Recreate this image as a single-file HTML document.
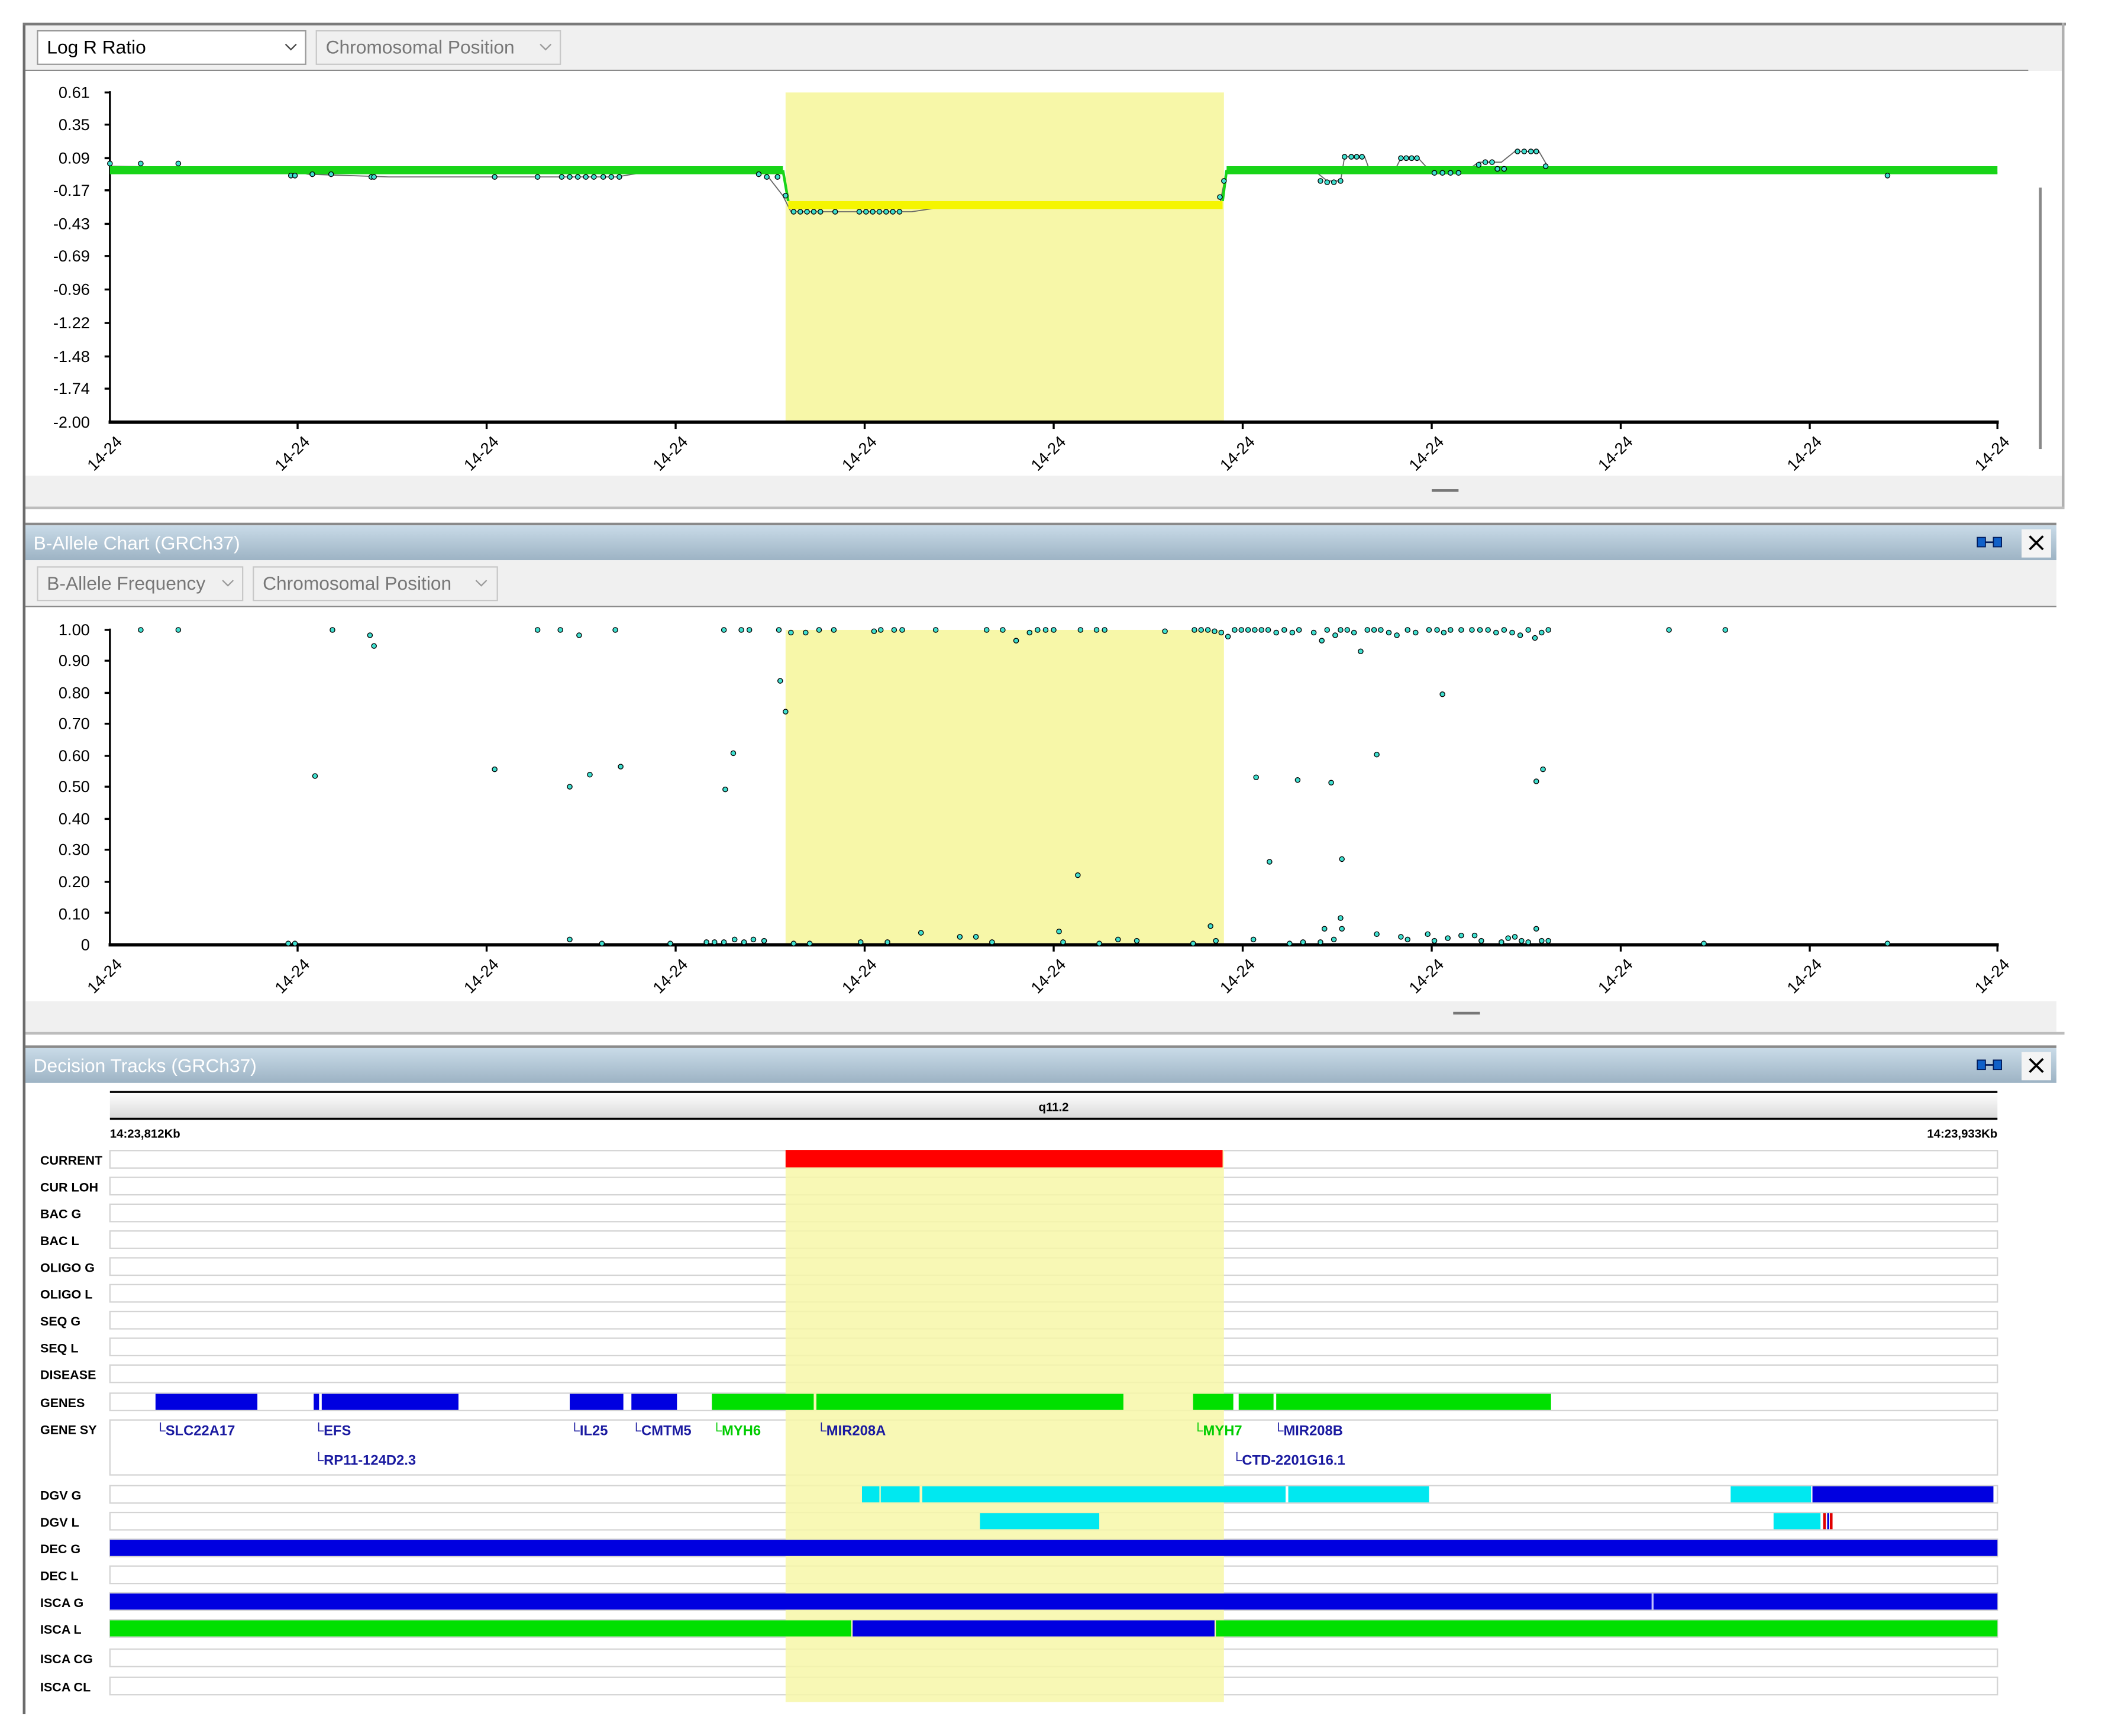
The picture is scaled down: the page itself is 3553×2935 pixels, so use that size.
<!DOCTYPE html>
<html><head><meta charset="utf-8"><style>
html,body{margin:0;padding:0;background:#fff;width:3553px;height:2935px;overflow:hidden}
svg{display:block}
text{font-family:"Liberation Sans",sans-serif}
</style></head><body>
<svg width="3553" height="2935" viewBox="0 0 1568 1295.3" preserveAspectRatio="none" xmlns="http://www.w3.org/2000/svg">
<defs>
<linearGradient id="tb" x1="0" y1="0" x2="0" y2="1"><stop offset="0" stop-color="#c9dbe8"/><stop offset="1" stop-color="#9db3c4"/></linearGradient>
<linearGradient id="ideo" x1="0" y1="0" x2="0" y2="1"><stop offset="0" stop-color="#ffffff"/><stop offset="1" stop-color="#d8d8d8"/></linearGradient>
</defs>
<rect width="1568" height="1296" fill="#fff"/>
<rect x="17" y="17" width="2" height="1262" fill="#6b6b6b"/>
<rect x="17" y="17" width="1524" height="2" fill="#7a7a7a"/>
<rect x="1538" y="17" width="2" height="362" fill="#b0b0b0"/>

<rect x="19" y="19" width="1519" height="34" fill="#f0f0f0"/>
<rect x="19" y="52" width="1494" height="1" fill="#8a8a8a"/>
<rect x="28" y="23" width="200" height="25" fill="#fff" stroke="#9a9a9a"/>
<text x="35" y="40" font-size="14" fill="#000">Log R Ratio</text>
<path d="M213 33 l4 4 l4 -4" fill="none" stroke="#444" stroke-width="1"/>
<rect x="236" y="23" width="182" height="25" fill="#f0f0f0" stroke="#c8c8c8"/>
<text x="243" y="40" font-size="14" fill="#777">Chromosomal Position</text>
<path d="M403 33 l4 4 l4 -4" fill="none" stroke="#999" stroke-width="1"/>
<rect x="19" y="53" width="1494" height="302" fill="#fff"/>
<rect x="19" y="355" width="1519" height="23" fill="#f0f0f0"/>
<rect x="1068" y="365" width="20" height="2" fill="#777"/>
<rect x="1513" y="53" width="25" height="302" fill="#fff"/>
<rect x="1521" y="140" width="2" height="195" fill="#888"/>
<rect x="19" y="378" width="1521" height="2" fill="#bdbdbd"/>

<rect x="586" y="69" width="327" height="246" fill="#f7f7a8"/>
<g font-size="12" fill="#000" text-anchor="end">
<text x="67" y="73">0.61</text><text x="67" y="97">0.35</text><text x="67" y="122">0.09</text><text x="67" y="146">-0.17</text><text x="67" y="171">-0.43</text><text x="67" y="195">-0.69</text><text x="67" y="220">-0.96</text><text x="67" y="245">-1.22</text><text x="67" y="270">-1.48</text><text x="67" y="294">-1.74</text><text x="67" y="319">-2.00</text>
</g>
<g stroke="#000" stroke-width="1.5">
<line x1="82" y1="68" x2="82" y2="316"/>
<line x1="81" y1="315" x2="1491" y2="315" stroke-width="2.5"/>
<path d="M78 69h4M78 93h4M78 118h4M78 142h4M78 167h4M78 191h4M78 216h4M78 241h4M78 266h4M78 290h4M222 315v5M363 315v5M504 315v5M645 315v5M786 315v5M927 315v5M1068 315v5M1209 315v5M1350 315v5M1490 315v5"/>
</g>
<g font-size="12" fill="#000">
<text transform="translate(70,352) rotate(-45)">14-24</text><text transform="translate(210,352) rotate(-45)">14-24</text><text transform="translate(351,352) rotate(-45)">14-24</text><text transform="translate(492,352) rotate(-45)">14-24</text><text transform="translate(633,352) rotate(-45)">14-24</text><text transform="translate(774,352) rotate(-45)">14-24</text><text transform="translate(915,352) rotate(-45)">14-24</text><text transform="translate(1056,352) rotate(-45)">14-24</text><text transform="translate(1197,352) rotate(-45)">14-24</text><text transform="translate(1338,352) rotate(-45)">14-24</text><text transform="translate(1478,352) rotate(-45)">14-24</text>
</g>
<path d="M82 124 L210 126 L230 130 L290 132 L460 132 L490 127 L570 128 L584 146 L590 158 L680 158 L700 155 L910 152 L915 127 L980 127 L990 135 L1000 135 L1003 117 L1018 117 L1022 128 L1040 128 L1045 118 L1058 118 L1068 129 L1092 129 L1103 121 L1120 121 L1130 113 L1148 113 L1155 125 L1490 129" fill="none" stroke="#666" stroke-width="0.8"/>
<rect x="82" y="124" width="502" height="6" fill="#18d418"/>
<rect x="915" y="124" width="575" height="6" fill="#18d418"/>
<path d="M584 127 L588 150" stroke="#18d418" stroke-width="2"/>
<path d="M912 150 L915 127" stroke="#18d418" stroke-width="2"/>
<rect x="588" y="150" width="324" height="6" fill="#f5f500"/>
<g fill="#40e0d0" stroke="#000" stroke-width="0.6">
<circle cx="82" cy="122" r="1.8"/><circle cx="105" cy="122" r="1.8"/><circle cx="133" cy="122" r="1.8"/><circle cx="217" cy="131" r="1.8"/><circle cx="220" cy="131" r="1.8"/><circle cx="233" cy="130" r="1.8"/><circle cx="247" cy="130" r="1.8"/><circle cx="277" cy="132" r="1.8"/><circle cx="279" cy="132" r="1.8"/><circle cx="369" cy="132" r="1.8"/><circle cx="401" cy="132" r="1.8"/><circle cx="419" cy="132" r="1.8"/><circle cx="425" cy="132" r="1.8"/><circle cx="431" cy="132" r="1.8"/><circle cx="437" cy="132" r="1.8"/><circle cx="443" cy="132" r="1.8"/><circle cx="450" cy="132" r="1.8"/><circle cx="456" cy="132" r="1.8"/><circle cx="462" cy="132" r="1.8"/><circle cx="566" cy="130" r="1.8"/><circle cx="572" cy="132" r="1.8"/><circle cx="580" cy="132" r="1.8"/><circle cx="586" cy="146" r="1.8"/>
<circle cx="592" cy="158" r="1.8"/><circle cx="597" cy="158" r="1.8"/><circle cx="602" cy="158" r="1.8"/><circle cx="607" cy="158" r="1.8"/><circle cx="612" cy="158" r="1.8"/><circle cx="623" cy="158" r="1.8"/><circle cx="641" cy="158" r="1.8"/><circle cx="646" cy="158" r="1.8"/><circle cx="651" cy="158" r="1.8"/><circle cx="656" cy="158" r="1.8"/><circle cx="661" cy="158" r="1.8"/><circle cx="666" cy="158" r="1.8"/><circle cx="671" cy="158" r="1.8"/><circle cx="910" cy="147" r="1.8"/><circle cx="913" cy="135" r="1.8"/>
<circle cx="985" cy="135" r="1.8"/><circle cx="990" cy="136" r="1.8"/><circle cx="995" cy="136" r="1.8"/><circle cx="1000" cy="135" r="1.8"/><circle cx="1003" cy="117" r="1.8"/><circle cx="1008" cy="117" r="1.8"/><circle cx="1012" cy="117" r="1.8"/><circle cx="1016" cy="117" r="1.8"/><circle cx="1045" cy="118" r="1.8"/><circle cx="1049" cy="118" r="1.8"/><circle cx="1053" cy="118" r="1.8"/><circle cx="1057" cy="118" r="1.8"/><circle cx="1070" cy="129" r="1.8"/><circle cx="1076" cy="129" r="1.8"/><circle cx="1082" cy="129" r="1.8"/><circle cx="1088" cy="129" r="1.8"/><circle cx="1103" cy="123" r="1.8"/><circle cx="1108" cy="121" r="1.8"/><circle cx="1113" cy="121" r="1.8"/><circle cx="1117" cy="126" r="1.8"/><circle cx="1122" cy="126" r="1.8"/><circle cx="1132" cy="113" r="1.8"/><circle cx="1137" cy="113" r="1.8"/><circle cx="1142" cy="113" r="1.8"/><circle cx="1146" cy="113" r="1.8"/><circle cx="1153" cy="124" r="1.8"/><circle cx="1408" cy="131" r="1.8"/>
</g>

<rect x="19" y="390" width="1515" height="2" fill="#8a8a8a"/>
<rect x="19" y="392" width="1515" height="26" fill="url(#tb)"/>
<text x="25" y="410" font-size="14" fill="#fff">B-Allele Chart (GRCh37)</text>
<rect x="1475" y="401" width="6" height="7" fill="#1060c8" stroke="#001a5a" stroke-width="0.8"/><rect x="1487" y="401" width="6" height="7" fill="#1060c8" stroke="#001a5a" stroke-width="0.8"/><rect x="1481" y="404" width="6" height="1.2" fill="#001a5a"/>
<rect x="1508" y="395" width="22" height="21" fill="#f4f4f4"/>
<path d="M1514 400 l10 10 M1524 400 l-10 10" stroke="#000" stroke-width="1.6"/>
<rect x="19" y="418" width="1515" height="34" fill="#f0f0f0"/>
<rect x="19" y="452" width="1515" height="1" fill="#8a8a8a"/>
<rect x="28" y="423" width="153" height="25" fill="#f0f0f0" stroke="#c8c8c8"/>
<text x="35" y="440" font-size="14" fill="#777">B-Allele Frequency</text>
<path d="M166 433 l4 4 l4 -4" fill="none" stroke="#999"/>
<rect x="189" y="423" width="182" height="25" fill="#f0f0f0" stroke="#c8c8c8"/>
<text x="196" y="440" font-size="14" fill="#777">Chromosomal Position</text>
<path d="M355 433 l4 4 l4 -4" fill="none" stroke="#999"/>
<rect x="19" y="747" width="1515" height="23" fill="#f0f0f0"/>
<rect x="1084" y="755" width="20" height="2" fill="#777"/>
<rect x="19" y="770" width="1521" height="2" fill="#bdbdbd"/>

<rect x="586" y="470" width="327" height="235" fill="#f7f7a8"/>
<g font-size="12" fill="#000" text-anchor="end">
<text x="67" y="474">1.00</text><text x="67" y="497">0.90</text><text x="67" y="521">0.80</text><text x="67" y="544">0.70</text><text x="67" y="568">0.60</text><text x="67" y="591">0.50</text><text x="67" y="615">0.40</text><text x="67" y="638">0.30</text><text x="67" y="662">0.20</text><text x="67" y="686">0.10</text><text x="67" y="709">0</text>
</g>
<g stroke="#000" stroke-width="1.5">
<line x1="82" y1="469" x2="82" y2="706"/>
<line x1="81" y1="705" x2="1491" y2="705" stroke-width="2.5"/>
<path d="M78 470h4M78 493h4M78 517h4M78 540h4M78 564h4M78 587h4M78 611h4M78 634h4M78 658h4M78 681h4M222 705v5M363 705v5M504 705v5M645 705v5M786 705v5M927 705v5M1068 705v5M1209 705v5M1350 705v5M1490 705v5"/>
</g>
<g font-size="12" fill="#000">
<text transform="translate(70,742) rotate(-45)">14-24</text><text transform="translate(210,742) rotate(-45)">14-24</text><text transform="translate(351,742) rotate(-45)">14-24</text><text transform="translate(492,742) rotate(-45)">14-24</text><text transform="translate(633,742) rotate(-45)">14-24</text><text transform="translate(774,742) rotate(-45)">14-24</text><text transform="translate(915,742) rotate(-45)">14-24</text><text transform="translate(1056,742) rotate(-45)">14-24</text><text transform="translate(1197,742) rotate(-45)">14-24</text><text transform="translate(1338,742) rotate(-45)">14-24</text><text transform="translate(1478,742) rotate(-45)">14-24</text>
</g>
<g fill="#40e0d0" stroke="#000" stroke-width="0.6">
<circle cx="105" cy="470" r="1.8"/><circle cx="133" cy="470" r="1.8"/><circle cx="248" cy="470" r="1.8"/><circle cx="276" cy="474" r="1.8"/><circle cx="279" cy="482" r="1.8"/><circle cx="401" cy="470" r="1.8"/><circle cx="418" cy="470" r="1.8"/><circle cx="432" cy="474" r="1.8"/><circle cx="459" cy="470" r="1.8"/><circle cx="540" cy="470" r="1.8"/><circle cx="553" cy="470" r="1.8"/><circle cx="559" cy="470" r="1.8"/><circle cx="581" cy="470" r="1.8"/><circle cx="590" cy="472" r="1.8"/><circle cx="601" cy="472" r="1.8"/><circle cx="611" cy="470" r="1.8"/><circle cx="622" cy="470" r="1.8"/><circle cx="652" cy="471" r="1.8"/><circle cx="657" cy="470" r="1.8"/><circle cx="667" cy="470" r="1.8"/><circle cx="673" cy="470" r="1.8"/><circle cx="698" cy="470" r="1.8"/><circle cx="736" cy="470" r="1.8"/><circle cx="748" cy="470" r="1.8"/><circle cx="758" cy="478" r="1.8"/><circle cx="768" cy="472" r="1.8"/><circle cx="774" cy="470" r="1.8"/><circle cx="780" cy="470" r="1.8"/><circle cx="786" cy="470" r="1.8"/><circle cx="806" cy="470" r="1.8"/><circle cx="818" cy="470" r="1.8"/><circle cx="824" cy="470" r="1.8"/><circle cx="869" cy="471" r="1.8"/>
<circle cx="891" cy="470" r="1.8"/><circle cx="896" cy="470" r="1.8"/><circle cx="901" cy="470" r="1.8"/><circle cx="906" cy="471" r="1.8"/><circle cx="911" cy="472" r="1.8"/><circle cx="916" cy="475" r="1.8"/><circle cx="921" cy="470" r="1.8"/><circle cx="926" cy="470" r="1.8"/><circle cx="931" cy="470" r="1.8"/><circle cx="936" cy="470" r="1.8"/><circle cx="941" cy="470" r="1.8"/><circle cx="946" cy="470" r="1.8"/><circle cx="952" cy="472" r="1.8"/><circle cx="958" cy="470" r="1.8"/><circle cx="964" cy="472" r="1.8"/><circle cx="969" cy="470" r="1.8"/><circle cx="980" cy="472" r="1.8"/><circle cx="986" cy="478" r="1.8"/><circle cx="990" cy="470" r="1.8"/><circle cx="996" cy="474" r="1.8"/><circle cx="1000" cy="470" r="1.8"/><circle cx="1005" cy="470" r="1.8"/><circle cx="1010" cy="472" r="1.8"/><circle cx="1015" cy="486" r="1.8"/><circle cx="1020" cy="470" r="1.8"/><circle cx="1025" cy="470" r="1.8"/><circle cx="1030" cy="470" r="1.8"/><circle cx="1036" cy="472" r="1.8"/><circle cx="1042" cy="474" r="1.8"/><circle cx="1050" cy="470" r="1.8"/><circle cx="1056" cy="472" r="1.8"/><circle cx="1066" cy="470" r="1.8"/><circle cx="1072" cy="470" r="1.8"/><circle cx="1077" cy="472" r="1.8"/><circle cx="1082" cy="470" r="1.8"/><circle cx="1090" cy="470" r="1.8"/><circle cx="1098" cy="470" r="1.8"/><circle cx="1104" cy="470" r="1.8"/><circle cx="1110" cy="470" r="1.8"/><circle cx="1116" cy="472" r="1.8"/><circle cx="1122" cy="470" r="1.8"/><circle cx="1128" cy="472" r="1.8"/><circle cx="1134" cy="474" r="1.8"/><circle cx="1140" cy="470" r="1.8"/><circle cx="1145" cy="476" r="1.8"/><circle cx="1150" cy="472" r="1.8"/><circle cx="1155" cy="470" r="1.8"/><circle cx="1245" cy="470" r="1.8"/><circle cx="1287" cy="470" r="1.8"/>
<circle cx="235" cy="579" r="1.8"/><circle cx="369" cy="574" r="1.8"/><circle cx="425" cy="587" r="1.8"/><circle cx="440" cy="578" r="1.8"/><circle cx="463" cy="572" r="1.8"/><circle cx="541" cy="589" r="1.8"/><circle cx="547" cy="562" r="1.8"/><circle cx="582" cy="508" r="1.8"/><circle cx="586" cy="531" r="1.8"/><circle cx="804" cy="653" r="1.8"/><circle cx="947" cy="643" r="1.8"/><circle cx="1001" cy="641" r="1.8"/><circle cx="1027" cy="563" r="1.8"/><circle cx="937" cy="580" r="1.8"/><circle cx="968" cy="582" r="1.8"/><circle cx="993" cy="584" r="1.8"/><circle cx="1076" cy="518" r="1.8"/><circle cx="1146" cy="583" r="1.8"/><circle cx="1151" cy="574" r="1.8"/>
<circle cx="215" cy="704" r="1.8"/><circle cx="220" cy="704" r="1.8"/><circle cx="425" cy="701" r="1.8"/><circle cx="449" cy="704" r="1.8"/><circle cx="500" cy="704" r="1.8"/><circle cx="527" cy="703" r="1.8"/><circle cx="533" cy="703" r="1.8"/><circle cx="540" cy="703" r="1.8"/><circle cx="548" cy="701" r="1.8"/><circle cx="555" cy="703" r="1.8"/><circle cx="562" cy="701" r="1.8"/><circle cx="570" cy="702" r="1.8"/><circle cx="592" cy="704" r="1.8"/><circle cx="604" cy="704" r="1.8"/><circle cx="642" cy="703" r="1.8"/><circle cx="662" cy="703" r="1.8"/><circle cx="687" cy="696" r="1.8"/><circle cx="716" cy="699" r="1.8"/><circle cx="728" cy="699" r="1.8"/><circle cx="740" cy="703" r="1.8"/><circle cx="790" cy="695" r="1.8"/><circle cx="793" cy="703" r="1.8"/><circle cx="820" cy="704" r="1.8"/><circle cx="834" cy="701" r="1.8"/><circle cx="848" cy="702" r="1.8"/><circle cx="890" cy="704" r="1.8"/><circle cx="903" cy="691" r="1.8"/><circle cx="907" cy="702" r="1.8"/><circle cx="935" cy="701" r="1.8"/><circle cx="962" cy="704" r="1.8"/><circle cx="972" cy="703" r="1.8"/><circle cx="985" cy="703" r="1.8"/><circle cx="988" cy="693" r="1.8"/><circle cx="995" cy="701" r="1.8"/><circle cx="1000" cy="685" r="1.8"/><circle cx="1001" cy="693" r="1.8"/><circle cx="1027" cy="697" r="1.8"/><circle cx="1045" cy="699" r="1.8"/><circle cx="1050" cy="701" r="1.8"/><circle cx="1065" cy="697" r="1.8"/><circle cx="1070" cy="702" r="1.8"/><circle cx="1080" cy="700" r="1.8"/><circle cx="1090" cy="698" r="1.8"/><circle cx="1100" cy="698" r="1.8"/><circle cx="1105" cy="702" r="1.8"/><circle cx="1120" cy="703" r="1.8"/><circle cx="1125" cy="700" r="1.8"/><circle cx="1130" cy="699" r="1.8"/><circle cx="1135" cy="702" r="1.8"/><circle cx="1140" cy="703" r="1.8"/><circle cx="1146" cy="693" r="1.8"/><circle cx="1150" cy="702" r="1.8"/><circle cx="1155" cy="702" r="1.8"/><circle cx="1271" cy="704" r="1.8"/><circle cx="1408" cy="704" r="1.8"/>
</g>

<rect x="19" y="780" width="1515" height="2" fill="#8a8a8a"/>
<rect x="19" y="782" width="1515" height="26" fill="url(#tb)"/>
<text x="25" y="800" font-size="14" fill="#fff">Decision Tracks (GRCh37)</text>
<rect x="1475" y="791" width="6" height="7" fill="#1060c8" stroke="#001a5a" stroke-width="0.8"/><rect x="1487" y="791" width="6" height="7" fill="#1060c8" stroke="#001a5a" stroke-width="0.8"/><rect x="1481" y="794" width="6" height="1.2" fill="#001a5a"/>
<rect x="1508" y="785" width="22" height="21" fill="#f4f4f4"/>
<path d="M1514 790 l10 10 M1524 790 l-10 10" stroke="#000" stroke-width="1.6"/>

<rect x="82" y="815" width="1408" height="20" fill="url(#ideo)"/>
<rect x="82" y="814" width="1408" height="1.5" fill="#000"/>
<rect x="82" y="834" width="1408" height="1.5" fill="#000"/>
<text x="786" y="829" font-size="9" font-weight="bold" text-anchor="middle">q11.2</text>
<text x="82" y="849" font-size="9" font-weight="bold">14:23,812Kb</text>
<text x="1490" y="849" font-size="9" font-weight="bold" text-anchor="end">14:23,933Kb</text>

<g fill="#fff" stroke="#d4d4d4" stroke-width="1">
<rect x="82" y="858.5" width="1408" height="13"/><rect x="82" y="878.5" width="1408" height="13"/><rect x="82" y="898.5" width="1408" height="13"/><rect x="82" y="918.5" width="1408" height="13"/><rect x="82" y="938.5" width="1408" height="13"/><rect x="82" y="958.5" width="1408" height="13"/><rect x="82" y="978.5" width="1408" height="13"/><rect x="82" y="998.5" width="1408" height="13"/><rect x="82" y="1018.5" width="1408" height="13"/><rect x="82" y="1039.5" width="1408" height="13"/><rect x="82" y="1059.5" width="1408" height="41"/><rect x="82" y="1108.5" width="1408" height="13"/><rect x="82" y="1128.5" width="1408" height="13"/><rect x="82" y="1148.5" width="1408" height="13"/><rect x="82" y="1168.5" width="1408" height="13"/><rect x="82" y="1188.5" width="1408" height="13"/><rect x="82" y="1208.5" width="1408" height="13"/><rect x="82" y="1230.5" width="1408" height="13"/><rect x="82" y="1251.5" width="1408" height="13"/>
</g>
<rect x="586" y="858" width="327" height="412" fill="#f7f7a8" opacity="0.85"/>

<g font-size="9.5" font-weight="bold" fill="#000">
<text x="30" y="869">CURRENT</text><text x="30" y="889">CUR LOH</text><text x="30" y="909">BAC G</text><text x="30" y="929">BAC L</text><text x="30" y="949">OLIGO G</text><text x="30" y="969">OLIGO L</text><text x="30" y="989">SEQ G</text><text x="30" y="1009">SEQ L</text><text x="30" y="1029">DISEASE</text><text x="30" y="1050">GENES</text><text x="30" y="1070">GENE SY</text><text x="30" y="1119">DGV G</text><text x="30" y="1139">DGV L</text><text x="30" y="1159">DEC G</text><text x="30" y="1179">DEC L</text><text x="30" y="1199">ISCA G</text><text x="30" y="1219">ISCA L</text><text x="30" y="1241">ISCA CG</text><text x="30" y="1262">ISCA CL</text>
</g>

<rect x="586" y="858" width="326" height="13" fill="#ff0000"/>
<g fill="#0000e0">
<rect x="116" y="1040" width="76" height="12"/><rect x="234" y="1040" width="4" height="12"/><rect x="240" y="1040" width="102" height="12"/><rect x="425" y="1040" width="40" height="12"/><rect x="471" y="1040" width="34" height="12"/>
</g>
<g fill="#00e000">
<rect x="531" y="1040" width="76" height="12"/><rect x="609" y="1040" width="229" height="12"/><rect x="890" y="1040" width="30" height="12"/><rect x="924" y="1040" width="26" height="12"/><rect x="952" y="1040" width="205" height="12"/>
</g>
<g font-size="10.5" font-weight="bold" fill="#1a1aa0">
<text x="116" y="1071">└SLC22A17</text><text x="234" y="1071">└EFS</text><text x="234" y="1093">└RP11-124D2.3</text><text x="425" y="1071">└IL25</text><text x="471" y="1071">└CMTM5</text><text x="609" y="1071">└MIR208A</text><text x="950" y="1071">└MIR208B</text><text x="919" y="1093">└CTD-2201G16.1</text>
<text x="531" y="1071" fill="#00cc00">└MYH6</text><text x="890" y="1071" fill="#00cc00">└MYH7</text>
</g>
<g fill="#00e8f0">
<rect x="643" y="1109" width="13" height="12"/><rect x="657" y="1109" width="29" height="12"/><rect x="688" y="1109" width="271" height="12"/><rect x="961" y="1109" width="105" height="12"/><rect x="1291" y="1109" width="60" height="12"/>
<rect x="731" y="1129" width="89" height="12"/><rect x="1323" y="1129" width="35" height="12"/>
</g>
<rect x="1352" y="1109" width="135" height="12" fill="#0000e0"/>
<rect x="1360" y="1129" width="2" height="12" fill="#e00000"/><rect x="1363" y="1129" width="1.5" height="12" fill="#0000e0"/><rect x="1365" y="1129" width="2" height="12" fill="#e00000"/>
<rect x="82" y="1149" width="1408" height="12" fill="#0000e0"/>
<rect x="82" y="1189" width="1408" height="12" fill="#0000e0"/>
<rect x="1232" y="1189" width="1.5" height="12" fill="#c0c0ff"/>
<rect x="82" y="1209" width="553" height="12" fill="#00e000"/>
<rect x="636" y="1209" width="270" height="12" fill="#0000e0"/>
<rect x="907" y="1209" width="583" height="12" fill="#00e000"/>
</svg>
</body></html>
